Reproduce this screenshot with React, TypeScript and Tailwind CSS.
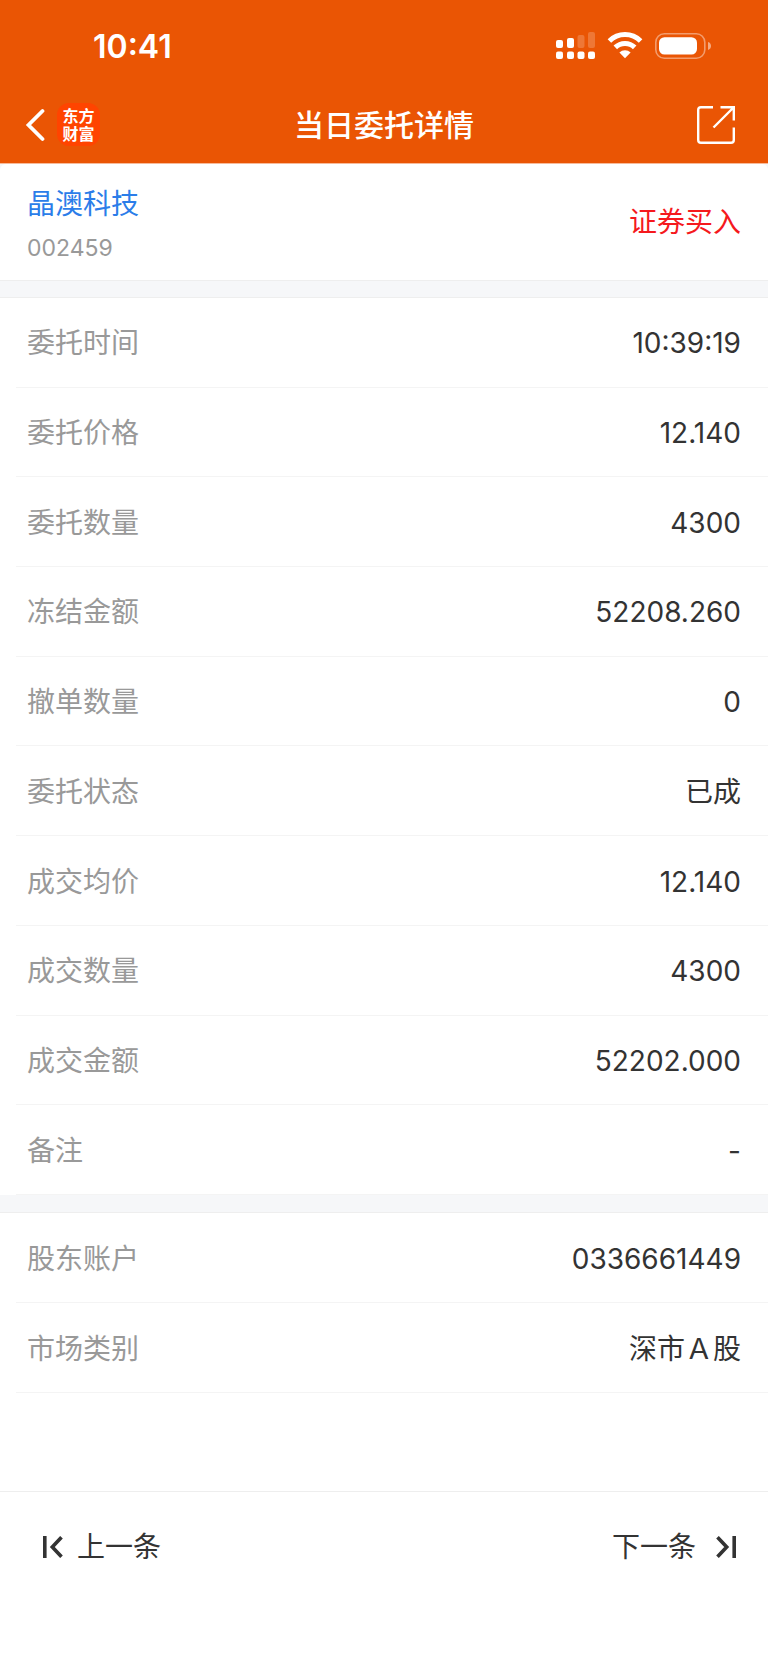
type Row = { label: string; value: string };

const orderRows: Row[] = [
  { label: "委托时间", value: "10:39:19" },
  { label: "委托价格", value: "12.140" },
  { label: "委托数量", value: "4300" },
  { label: "冻结金额", value: "52208.260" },
  { label: "撤单数量", value: "0" },
  { label: "委托状态", value: "已成" },
  { label: "成交均价", value: "12.140" },
  { label: "成交数量", value: "4300" },
  { label: "成交金额", value: "52202.000" },
  { label: "备注", value: "-" },
];

const accountRows: Row[] = [
  { label: "股东账户", value: "0336661449" },
  { label: "市场类别", value: "深市Ａ股" },
];

function SignalIcon() {
  return (
    <svg width="39" height="28" viewBox="0 0 39 28" fill="white" aria-hidden="true">
      <rect x="0" y="8" width="7" height="8" rx="2" />
      <rect x="11" y="6" width="7" height="10" rx="2" />
      <rect x="21.5" y="3" width="7" height="13" rx="2" opacity="0.2" />
      <rect x="32" y="0" width="7" height="16" rx="2" opacity="0.2" />
      <rect x="0" y="19.5" width="7" height="7.5" rx="2" />
      <rect x="11" y="19.5" width="7" height="7.5" rx="2" />
      <rect x="21.5" y="19.5" width="7" height="7.5" rx="2" />
      <rect x="32" y="19.5" width="7" height="7.5" rx="2" />
    </svg>
  );
}

function WifiIcon() {
  return (
    <svg width="36" height="28" viewBox="0 0 36 28" fill="none" aria-hidden="true">
      <path d="M2.4 9a22.2 22.2 0 0 1 31.2 0" stroke="white" strokeWidth="5" />
      <path d="M8.3 15.4a13.8 13.8 0 0 1 19.4 0" stroke="white" strokeWidth="5" />
      <path d="M18 26.2l-5.6-5.6a8 8 0 0 1 11.2 0z" fill="white" />
    </svg>
  );
}

function BatteryIcon() {
  return (
    <svg width="57" height="28" viewBox="0 0 57 28" fill="none" aria-hidden="true">
      <rect x="0.8" y="1.8" width="49" height="24.4" rx="8.5" stroke="white" strokeOpacity="0.42" strokeWidth="1.6" />
      <rect x="4" y="5.2" width="38" height="17.4" rx="5.5" fill="white" />
      <path d="M53 10c2 .6 3 2.200 3 4s-1 3.400-3 4z" fill="white" fillOpacity="0.5" />
    </svg>
  );
}

function SkipIcon({ flip = false }: { flip?: boolean }) {
  return (
    <svg
      width="20"
      height="22"
      viewBox="0 0 20 22"
      fill="none"
      stroke="#333333"
      strokeWidth="3.6"
      aria-hidden="true"
      className={flip ? "-scale-x-100" : ""}
    >
      <path d="M1.800 0v22" />
      <path d="M18.500 1.200L9.300 11l9.200 9.800" strokeWidth="3.600" />
    </svg>
  );
}

function RowList({ rows, className }: { rows: Row[]; className: string }) {
  return (
    <dl className={`grid auto-rows-fr bg-white pl-4 ${className}`}>
      {rows.map((row) => (
        <div
          key={row.label}
          className="flex items-center justify-between border-b border-[#f4f4f4] pl-[11px] pr-[27px] pt-0.5 text-[28px] leading-10"
        >
          <dt className="text-[#999999]">{row.label}</dt>
          <dd className="text-[#333333]">{row.value}</dd>
        </div>
      ))}
    </dl>
  );
}

export default function App() {
  return (
    <div className="flex min-h-screen flex-col bg-white font-['Inter','Noto_Sans_CJK_SC',sans-serif]">
      <header className="border-b border-[#f7bb9b] bg-[#ea5504] text-white">
        <div className="flex h-[86px] items-center justify-between pl-[93px] pr-14 pt-1.5">
          <time className="pt-0.5 text-[32px] font-semibold leading-10">10:41</time>
          <div className="flex items-center gap-3">
            <SignalIcon />
            <WifiIcon />
            <BatteryIcon />
          </div>
        </div>

        <div className="grid h-[77px] grid-cols-[1fr_auto_1fr] items-center px-6">
          <div className="flex items-center gap-3">
            <button type="button" aria-label="返回">
              <svg width="21" height="34" viewBox="0 0 21 34" fill="none" stroke="white" strokeWidth="3.800">
                <path d="M18.500 3L4.500 17l14 14" strokeLinecap="round" />
              </svg>
            </button>
            <div className="flex size-[43px] flex-col items-center justify-center rounded-xl bg-[#ff4400] text-base font-bold leading-[18px]">
              <span>东方</span>
              <span>财富</span>
            </div>
          </div>
          <h1 className="text-[30px] font-medium leading-10">当日委托详情</h1>
          <button type="button" aria-label="分享" className="mr-2 justify-self-end">
            <svg width="40" height="40" viewBox="0 0 40 40" fill="none" stroke="white" strokeWidth="2.400">
              <path d="M17 2.200H5a2.800 2.800 0 0 0-2.800 2.800v30A2.800 2.800 0 0 0 5 37.800h30a2.800 2.800 0 0 0 2.800-2.800V22.500" />
              <path d="M24.500 2.200h13.300v13.300M37.500 2.500L17.500 22.500" />
            </svg>
          </button>
        </div>
      </header>

      <main className="bg-[#f6f7f9]">
        <section className="flex items-center justify-between rounded-t-md border-b border-[#eeeeee] bg-white pb-4 pl-[27px] pr-[27px] pt-5">
          <div>
            <h2 className="text-[28px] leading-10 text-[#2b7de9]">晶澳科技</h2>
            <p className="pt-2 text-[23px] leading-8 text-[#999999]">002459</p>
          </div>
          <p className="pb-1 text-[28px] leading-10 text-[#f5191d]">证券买入</p>
        </section>

        <RowList rows={orderRows} className="mt-4 min-h-[898px] border-t border-[#eeeeee]" />
        <RowList rows={accountRows} className="mt-[17px] min-h-[181px] border-t border-[#eeeeee]" />
      </main>

      <nav className="mt-auto flex h-[171px] items-start justify-between border-t border-[#eeeeee] px-8 pt-[31px] text-[28px] leading-10 text-[#333333]">
        <button type="button" className="flex items-center gap-3.5 px-[11px] py-1">
          <SkipIcon />
          上一条
        </button>
        <button type="button" className="flex items-center gap-5 py-1">
          下一条
          <SkipIcon flip />
        </button>
      </nav>
    </div>
  );
}
